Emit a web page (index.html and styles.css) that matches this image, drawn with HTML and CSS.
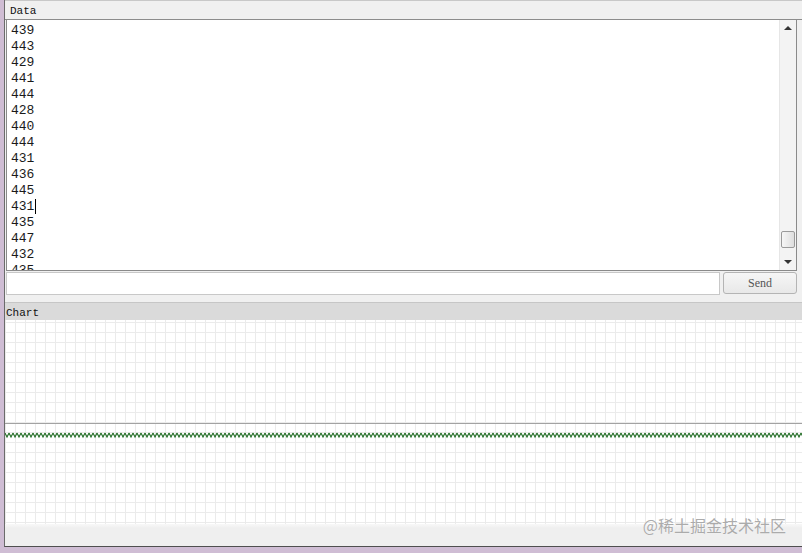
FILE: index.html
```html
<!DOCTYPE html>
<html lang="en">

<head>
    <meta charset="UTF-8">
    <meta name="viewport" content="width=device-width, initial-scale=1.0">
    <title>Serial Monitor</title>
    <link rel="stylesheet" href="styles.css">
</head>

<body>
    <div class="window">
        <div class="panel-title">Data</div>

        <div class="data-box">
            <div class="data-lines">
                <div>439</div>
                <div>443</div>
                <div>429</div>
                <div>441</div>
                <div>444</div>
                <div>428</div>
                <div>440</div>
                <div>444</div>
                <div>431</div>
                <div>436</div>
                <div>445</div>
                <div><span class="caret">431</span></div>
                <div>435</div>
                <div>447</div>
                <div>432</div>
                <div>435</div>
            </div>
            <div class="scrollbar">
                <div class="arrow"><span class="arrow-up"></span></div>
                <div class="track"><div class="thumb"></div></div>
                <div class="arrow"><span class="arrow-down"></span></div>
            </div>
        </div>

        <div class="send-row">
            <input type="text" class="send-input">
            <button class="send-btn">Send</button>
        </div>

        <div class="panel-title chart-title">Chart</div>

        <div class="chart">
            <div class="midline"></div>
            <svg class="signal" width="797" height="8" xmlns="http://www.w3.org/2000/svg">
                <defs>
                    <pattern id="zig" width="4" height="8" patternUnits="userSpaceOnUse">
                        <polyline points="0,2 2,6 4,2" fill="none" stroke="#1f6b22" stroke-width="1.1"/>
                    </pattern>
                </defs>
                <rect x="0" y="0" width="797" height="8" fill="url(#zig)"/>
            </svg>
        </div>

        <div class="footer"></div>
        <div class="watermark">@稀土掘金技术社区</div>
    </div>
</body>

</html>
```

FILE: styles.css
```css
body {
    margin: 0;
    padding: 0;
    width: 802px;
    height: 553px;
    overflow: hidden;
    background-color: #cfbdd4;
    font-family: "Liberation Mono", monospace;
}

.window {
    position: relative;
    margin-left: 4px;
    width: 797px;
    height: 546px;
    border-left: 1px solid #6b6b6b;
    border-bottom: 1px solid #4f4f4f;
    background-color: #f0f0f0;
    display: flex;
    flex-direction: column;
}

.panel-title {
    height: 20px;
    box-sizing: border-box;
    border-top: 1px solid #c8c8c8;
    border-bottom: 1px solid #8c8c8c;
    padding: 3px 0 0 5px;
    font-size: 11px;
    line-height: 15px;
    color: #111;
}

.data-box {
    margin-left: 1px;
    width: 791px;
    height: 251px;
    box-sizing: border-box;
    border: 1px solid #8a8a8a;
    border-top: none;
    background-color: #fff;
    display: flex;
}

.data-lines {
    flex: 1;
    overflow: hidden;
    padding: 3px 0 0 4px;
    font-size: 13px;
    line-height: 16px;
    color: #1a1a1a;
}

.caret {
    border-right: 1px solid #000;
    padding-right: 1px;
}

.scrollbar {
    width: 16px;
    background-color: #f3f3f3;
    border-left: 1px solid #e6e6e6;
    display: flex;
    flex-direction: column;
}

.arrow {
    height: 16px;
    display: flex;
    justify-content: center;
    align-items: center;
}

.arrow-up {
    width: 0;
    height: 0;
    border-left: 4px solid transparent;
    border-right: 4px solid transparent;
    border-bottom: 4px solid #333;
}

.arrow-down {
    width: 0;
    height: 0;
    border-left: 4px solid transparent;
    border-right: 4px solid transparent;
    border-top: 4px solid #333;
}

.track {
    flex: 1;
    display: flex;
    flex-direction: column;
    justify-content: flex-end;
    padding-bottom: 6px;
}

.thumb {
    height: 15px;
    margin: 0 1px;
    border: 1px solid #9a9a9a;
    border-radius: 2px;
    background: linear-gradient(to right, #f6f6f6, #dedede);
}

.send-row {
    display: flex;
    margin: 1px 0 0 1px;
    height: 23px;
}

.send-input {
    width: 714px;
    height: 23px;
    box-sizing: border-box;
    margin: 0;
    border: 1px solid #c8c8c8;
    background-color: #fff;
    outline: none;
}

.send-btn {
    margin-left: 3px;
    width: 74px;
    height: 22px;
    border: 1px solid #b4b4b4;
    border-radius: 3px;
    background: linear-gradient(#f6f6f6, #e8e8e8);
    font-family: "Liberation Serif", serif;
    font-size: 12px;
    color: #555;
    padding: 0;
}

.chart-title {
    margin-top: 7px;
    height: 18px;
    padding-top: 4px;
    line-height: 13px;
    background-color: #dadada;
    border-top: 1px solid #c6c6c6;
    border-bottom: none;
    padding-left: 1px;
}

.chart {
    position: relative;
    height: 204px;
    background-color: #fff;
    background-image:
        linear-gradient(to right, #ebebeb 1px, transparent 1px),
        linear-gradient(to bottom, #ebebeb 1px, transparent 1px);
    background-size: 10px 10px;
    background-position: 0 2px;
}

.midline {
    position: absolute;
    left: 0;
    right: 0;
    top: 103px;
    height: 1px;
    background-color: #a2a2a2;
}

.signal {
    position: absolute;
    left: 0;
    top: 111px;
}

.footer {
    flex: 1;
    background: linear-gradient(#f8f8f8, #efefef 4px);
}

.watermark {
    position: absolute;
    right: 16px;
    bottom: 9px;
    font-family: "Noto Sans CJK SC", sans-serif;
    font-size: 16px;
    color: #ababab;
    text-shadow: 0 0 1px #fff;
}
```
